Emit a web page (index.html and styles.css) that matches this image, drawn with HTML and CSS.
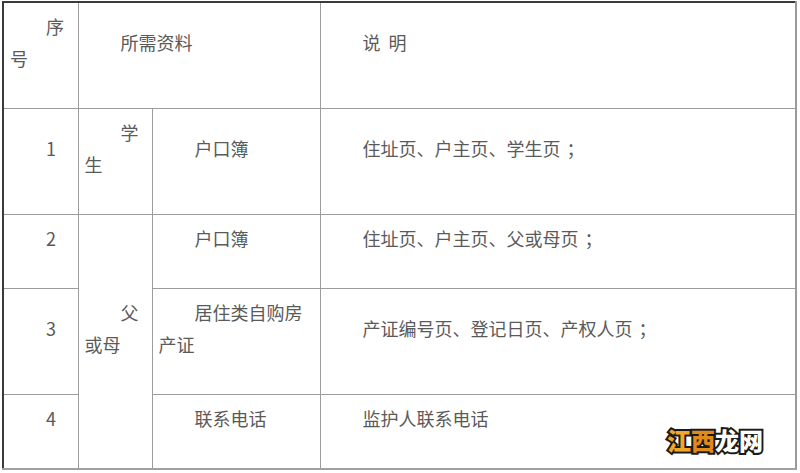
FILE: index.html
```html
<!DOCTYPE html>
<html lang="zh-CN">
<head>
<meta charset="utf-8">
<title>所需资料</title>
<link rel="stylesheet" href="styles.css">
</head>
<body>
<div class="page">
  <table class="docs">
    <colgroup>
      <col class="c-no">
      <col class="c-who">
      <col class="c-item">
      <col class="c-desc">
    </colgroup>
    <tr>
      <td>序号</td>
      <td colspan="2">所需资料</td>
      <td>说&nbsp;&nbsp;明</td>
    </tr>
    <tr>
      <td>1</td>
      <td>学生</td>
      <td>户口簿</td>
      <td>住址页、户主页、学生页<span class="semi">；</span></td>
    </tr>
    <tr>
      <td>2</td>
      <td rowspan="3">父或母</td>
      <td>户口簿</td>
      <td>住址页、户主页、父或母页<span class="semi">；</span></td>
    </tr>
    <tr>
      <td>3</td>
      <td>居住类自购房产证</td>
      <td>产证编号页、登记日页、产权人页<span class="semi">；</span></td>
    </tr>
    <tr>
      <td>4</td>
      <td>联系电话</td>
      <td>监护人联系电话</td>
    </tr>
  </table>
  <div class="mark"><span class="m1">江</span><span class="m2">西</span><span class="m3">龙网</span></div>
</div>
</body>
</html>
```

FILE: styles.css
```css
html, body {
  margin: 0;
  padding: 0;
  background: #fff;
}

.page {
  position: relative;
  width: 800px;
  height: 473px;
  padding: 1px 0 0 2px;
  box-sizing: border-box;
}

.docs {
  width: 795px;
  table-layout: fixed;
  border-collapse: collapse;
  font-family: "Noto Sans CJK SC", "Microsoft YaHei", sans-serif;
  font-size: 18px;
  color: #5a5a5a;
  border-top: 2px solid #3a3a3a;
  border-left: 2px solid #3a3a3a;
  border-right: 2px solid #9a9a9a;
  border-bottom: 2px solid #a0a0a0;
}

.c-no { width: 75px; }
.c-who { width: 74px; }
.c-item { width: 168px; }
.c-desc { width: auto; }

.docs td {
  border: 1px solid #9c9c9c;
  padding: 7px 6px 34px;
  line-height: 32px;
  text-indent: 2em;
  vertical-align: middle;
  word-break: break-all;
}

.semi {
  margin-left: 6px;
}

.mark {
  position: absolute;
  left: 667px;
  top: 425px;
  font-family: "Noto Sans CJK SC", sans-serif;
  font-weight: 900;
  font-size: 24px;
  line-height: 30px;
  -webkit-text-stroke: 4px #1a1a1a;
  paint-order: stroke fill;
}

.m1 { color: #f2a72a; }
.m2 { color: #e08a1c; }
.m3 { color: #ffffff; }
```
